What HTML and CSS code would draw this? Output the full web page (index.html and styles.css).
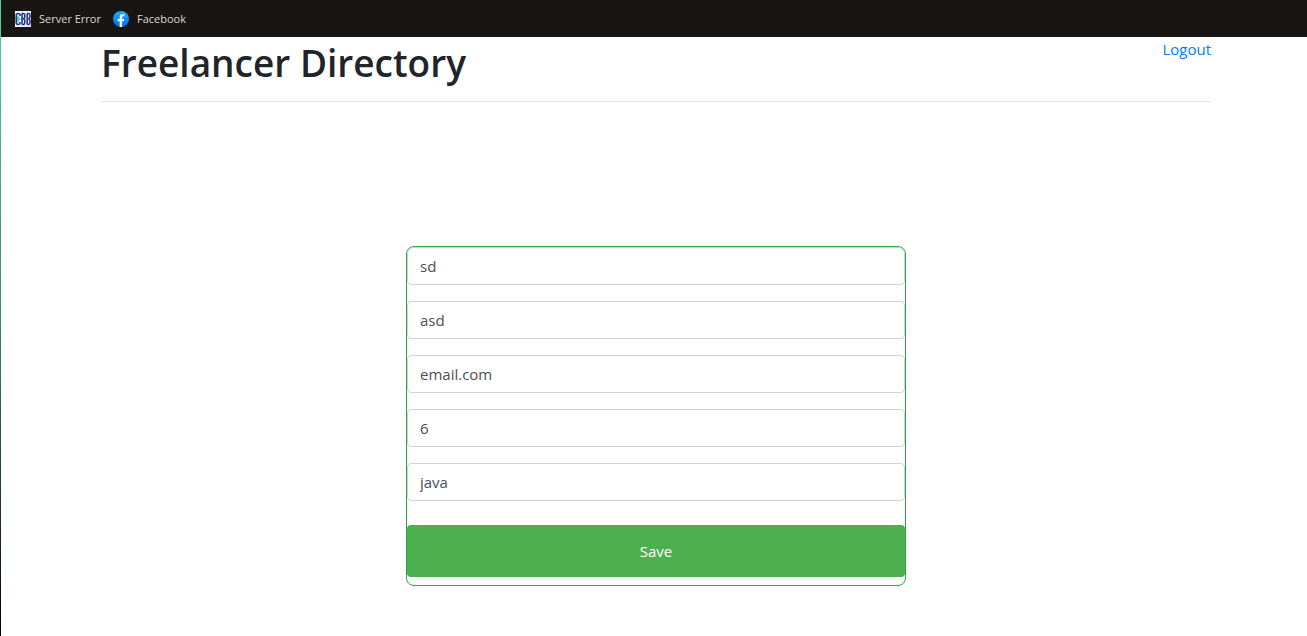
FILE: index.html
```
<!DOCTYPE html>
<html lang="en">
<head>
<meta charset="utf-8">
<title>Freelancer Directory</title>
<link rel="stylesheet" href="styles.css">
</head>
<body>
<div class="edge"></div>
<div class="window">
  <nav class="bookmarks" aria-label="Bookmarks">
    <a class="bookmark" href="#">
      <svg class="bookmark-icon" viewBox="0 0 16 16" aria-hidden="true">
        <rect width="16" height="16" fill="#f1f5fb"/>
        <g fill="none" stroke-width="1.600">
          <path d="M5 5V4Q5 2.500 3.200 2.500Q1.200 2.500 1.200 5V11Q1.200 13.500 3.200 13.500Q5 13.500 5 12V11" stroke="#27348b"/>
          <path d="M7 2.500V13.500M7 2.500H8.500Q9.800 2.500 9.800 5Q9.800 7.800 8 7.800Q9.800 7.800 9.800 10.500Q9.800 13.500 8.500 13.500H7M12.200 2.500V13.500M12.200 2.500H13.700Q15 2.500 15 5Q15 7.800 13.200 7.800Q15 7.800 15 10.500Q15 13.500 13.700 13.500H12.200" stroke="#27348b"/>
          <path d="M3 5V11M3 8H5.500" stroke="#27c4c4"/>
        </g>
      </svg>
      <span>Server Error</span>
    </a>
    <a class="bookmark" href="#">
      <svg class="bookmark-icon" viewBox="0 0 16 16" aria-hidden="true">
        <defs><linearGradient id="fb" x1="0" y1="0" x2="0" y2="1"><stop offset="0" stop-color="#19aeff"/><stop offset="1" stop-color="#0668e8"/></linearGradient></defs>
        <circle cx="8" cy="8" r="8" fill="url(#fb)"/>
        <path d="M6.700 15.900V10.300H4.700V8H6.700V6.300C6.700 4.200 7.900 3.100 9.700 3.100L11.300 3.300V5.200H10.300C9.400 5.200 9.100 5.700 9.100 6.400V8H11.200L10.800 10.300H9.100V15.900Z" fill="#fff"/>
      </svg>
      <span>Facebook</span>
    </a>
  </nav>
  <div class="page">
    <header class="header">
      <h1 class="title">Freelancer Directory</h1>
      <a class="logout" href="#">Logout</a>
    </header>
    <form class="form">
      <input class="field" type="text" aria-label="First name" value="sd">
      <input class="field" type="text" aria-label="Last name" value="asd">
      <input class="field" type="text" aria-label="Email" value="email.com">
      <input class="field" type="text" aria-label="Experience" value="6">
      <input class="field" type="text" aria-label="Skill" value="java">
      <button class="save" type="button">Save</button>
    </form>
  </div>
</div>
</body>
</html>
```
FILE: styles.css
```
* { box-sizing: border-box; }
body {
  margin: 0;
  min-height: 100vh;
  display: flex;
  background: #fff;
  color: #212529;
  font: 15px/24px "Segoe UI", "Open Sans", "Noto Sans", sans-serif;
}
.edge {
  width: 1px;
  background: linear-gradient(#4fd6a6, #3a8a6c 50%, #000);
}
.window { flex: 1; }
.bookmarks {
  height: 37px;
  padding: 0 14px;
  display: flex;
  align-items: center;
  gap: 12px;
  background: #191512;
}
.bookmark {
  display: flex;
  align-items: center;
  gap: 8px;
  color: #dcd8d2;
  font-size: 11px;
  line-height: 16px;
  text-decoration: none;
}
.bookmark-icon { width: 16px; height: 16px; }
.page { padding: 0 96px 0 100px; }
.header {
  display: flex;
  justify-content: space-between;
  align-items: flex-start;
  padding-bottom: 12px;
  border-bottom: 1px solid #e5e5e5;
}
.title {
  margin: 0;
  font-size: 37px;
  font-weight: 600;
  line-height: 52px;
}
.logout { color: #007bff; text-decoration: none; }
.form {
  max-width: 500px;
  margin: 144px auto 0;
  padding-bottom: 8px;
  display: flex;
  flex-direction: column;
  gap: 16px;
  border: 1px solid #28a745;
  border-radius: 8px;
}
.field {
  width: 100%;
  height: 38px;
  padding: 6px 12px;
  border: 1px solid #ced4da;
  border-radius: 4px;
  background: #fff;
  color: #495057;
  font: inherit;
}
.field:first-child { border-radius: 7px 7px 4px 4px; }
.save {
  height: 52px;
  margin-top: 8px;
  border: 0;
  border-radius: 4px;
  background: #4caf50;
  color: #fff;
  font: inherit;
}
```
